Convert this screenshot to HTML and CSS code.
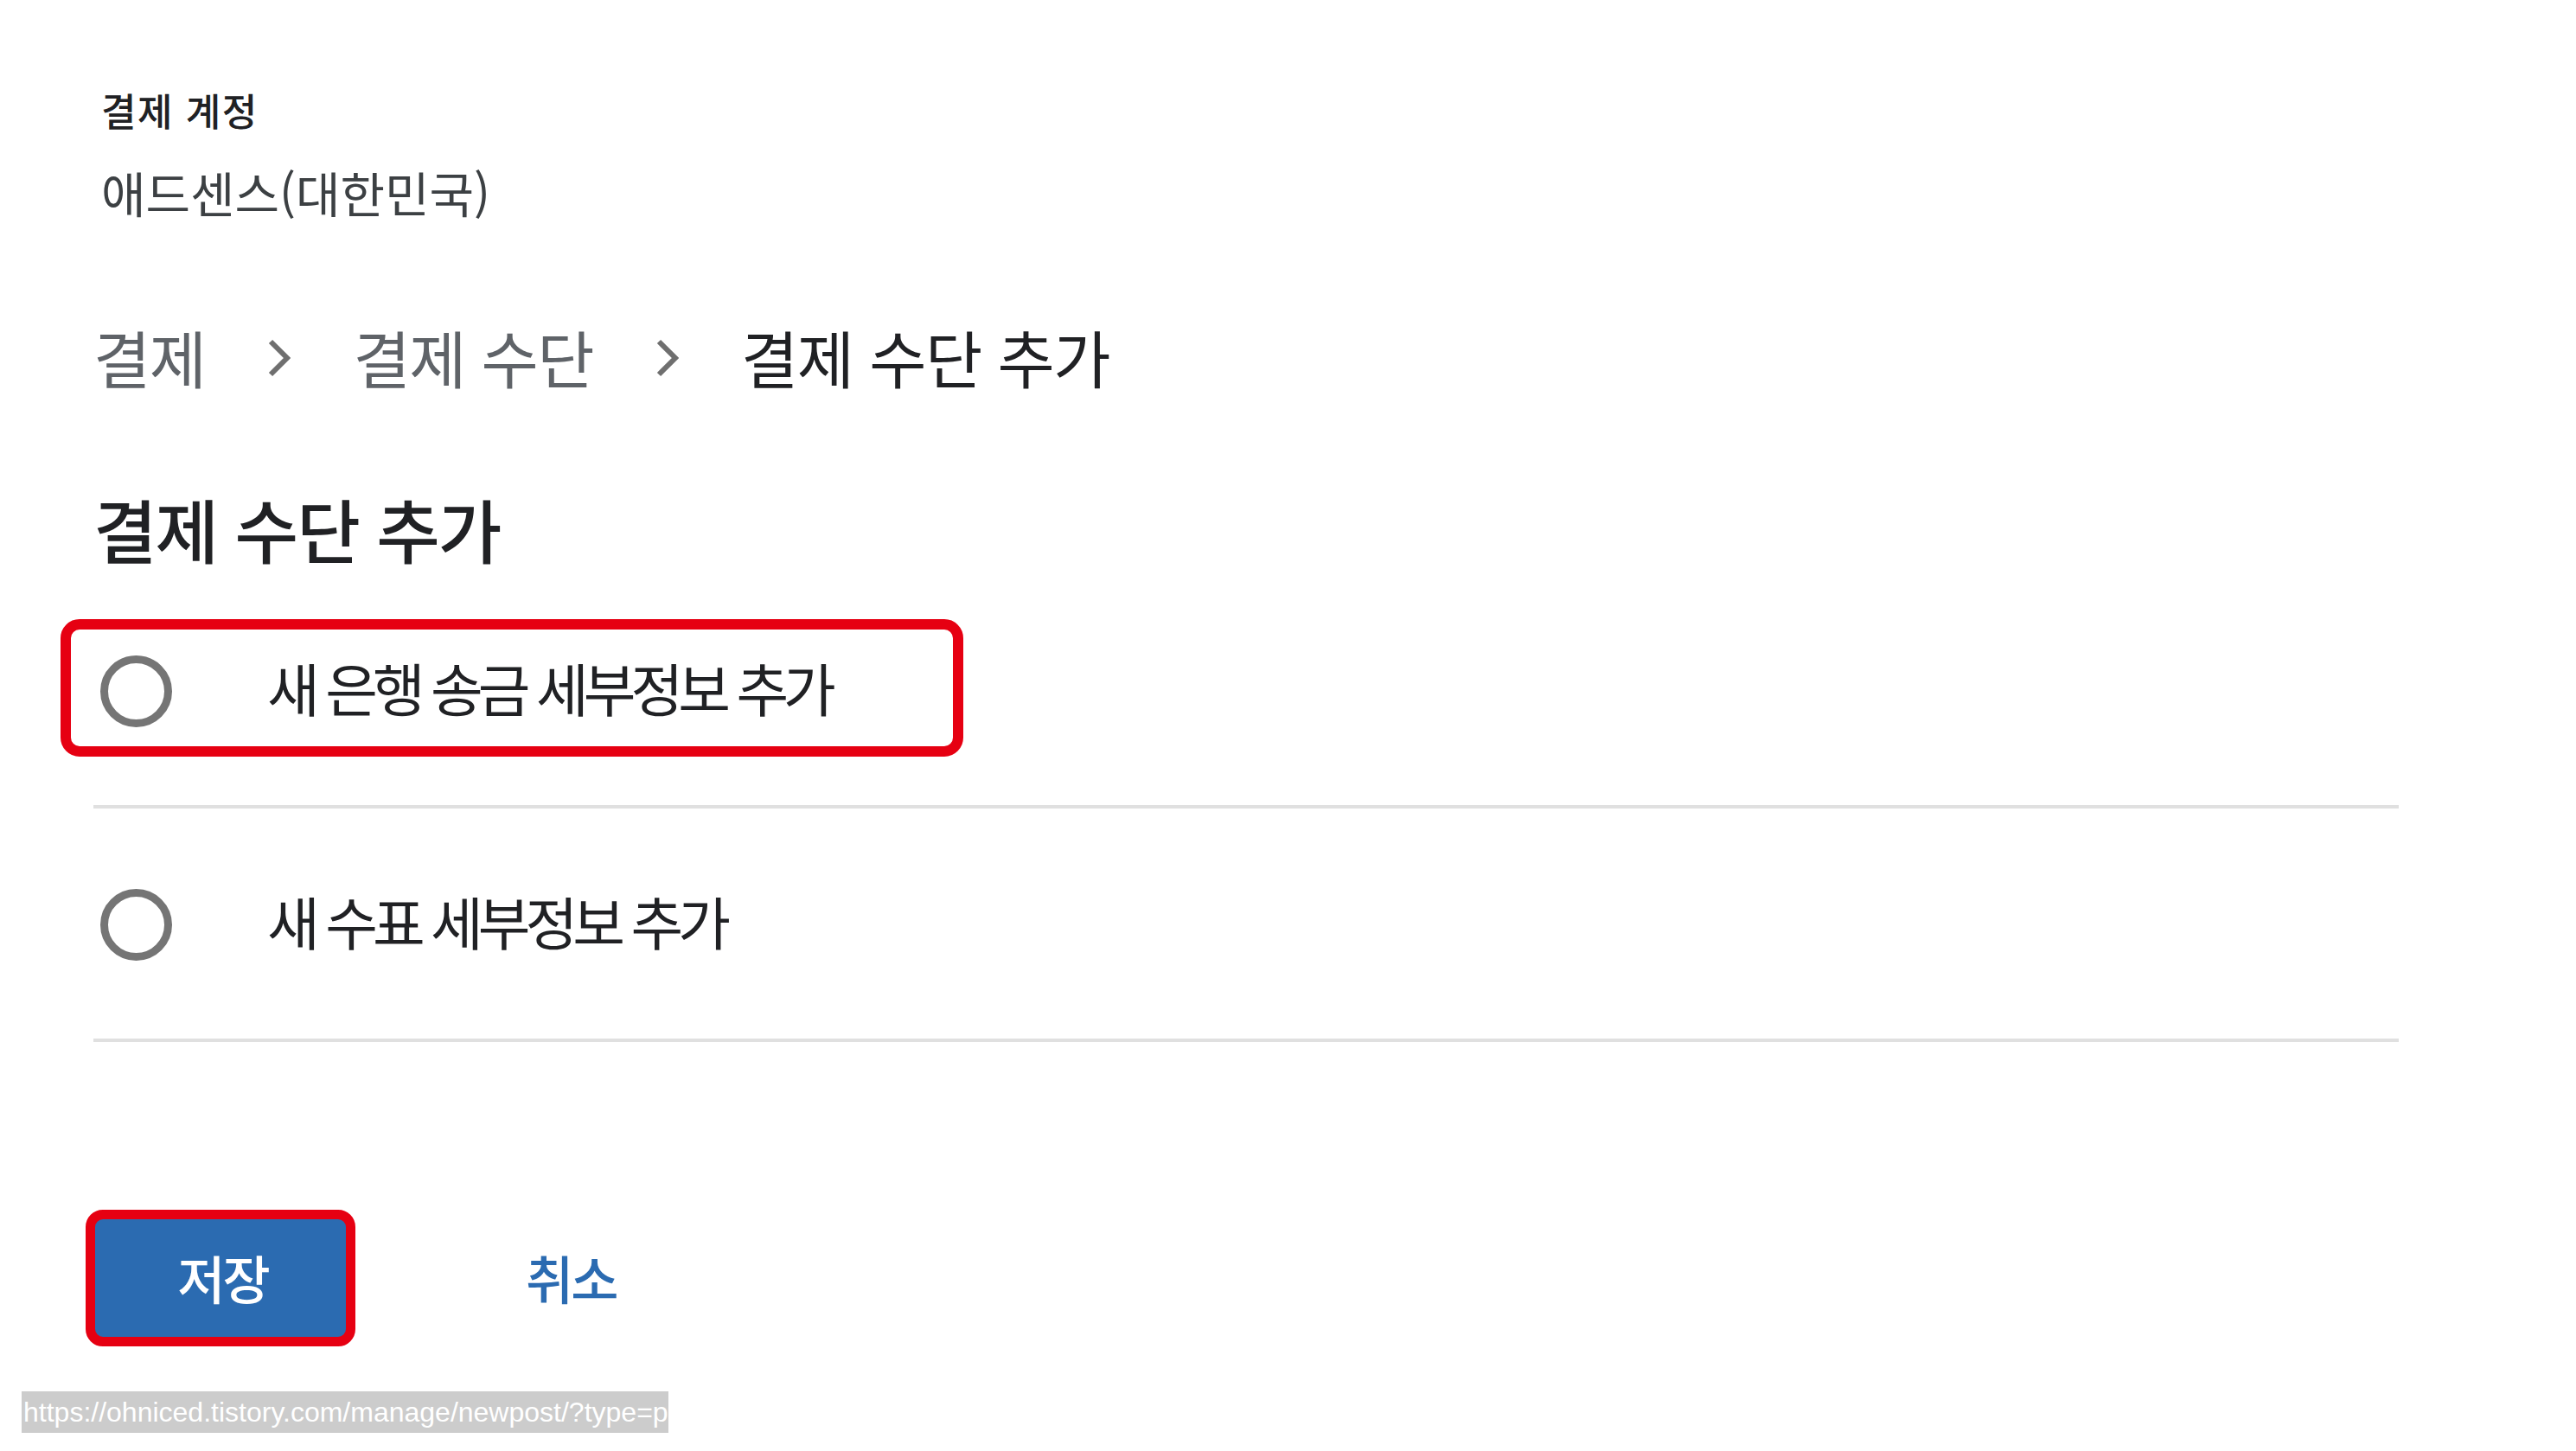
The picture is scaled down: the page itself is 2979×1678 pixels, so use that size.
FILE: index.html
```html
<!DOCTYPE html>
<html lang="ko">
<head>
<meta charset="utf-8">
<title>결제 수단 추가</title>
<link rel="stylesheet" href="styles.css">
</head>
<body>
<main class="page">
  <section class="account">
    <div class="account-label">결제 계정</div>
    <div class="account-value">애드센스(대한민국)</div>
  </section>

  <nav class="crumbs">
    <span class="crumb">결제</span>
    <svg class="chev" viewBox="0 0 28 46" aria-hidden="true"><polyline points="4,4 23,23 4,42" fill="none" stroke="#6f6f6f" stroke-width="6"/></svg>
    <span class="crumb">결제 수단</span>
    <svg class="chev" viewBox="0 0 28 46" aria-hidden="true"><polyline points="4,4 23,23 4,42" fill="none" stroke="#6f6f6f" stroke-width="6"/></svg>
    <span class="crumb current">결제 수단 추가</span>
  </nav>

  <h1 class="title">결제 수단 추가</h1>

  <div class="options">
    <label class="option">
      <span class="radio"></span>
      <span class="option-text">새 은행 송금 세부정보 추가</span>
      <span class="annot annot-option"></span>
    </label>
    <label class="option">
      <span class="radio"></span>
      <span class="option-text">새 수표 세부정보 추가</span>
    </label>
  </div>

  <div class="actions">
    <div class="save-wrap">
      <button class="btn-save" type="button">저장</button>
      <span class="annot annot-save"></span>
    </div>
    <button class="btn-cancel" type="button">취소</button>
  </div>
</main>

<div class="status">https://ohniced.tistory.com/manage/newpost/?type=p</div>
</body>
</html>
```

FILE: styles.css
```css
html, body {
  margin: 0;
  padding: 0;
  background: #ffffff;
}

body {
  font-family: "Noto Sans CJK KR", "Noto Sans", sans-serif;
  color: #202124;
  min-height: 1678px;
}

.page {
  padding: 97px 205px 120px 108px;
}

.account-label {
  font-size: 44px;
  line-height: 60px;
  font-weight: 500;
  letter-spacing: 1.5px;
  margin-left: 9px;
  color: #202124;
}

.account-value {
  margin-top: 30px;
  margin-left: 9px;
  font-size: 56px;
  line-height: 70px;
  letter-spacing: 0;
  color: #3c4043;
}

.crumbs {
  margin-top: 110px;
  height: 90px;
  display: flex;
  align-items: center;
}

.crumb {
  font-size: 72px;
  line-height: 90px;
  letter-spacing: -1.5px;
  color: #5f6368;
}

.crumb.current {
  color: #202124;
}

.chev {
  width: 28px;
  height: 46px;
  margin: 4px 71px 0 72px;
  flex: none;
}

.title {
  margin: 103px 0 0 0;
  font-size: 80px;
  line-height: 100px;
  font-weight: 500;
  letter-spacing: -2px;
  color: #202124;
}

.options {
  margin-top: 5px;
}

.option {
  position: relative;
  box-sizing: border-box;
  height: 270px;
  padding-top: 2px;
  border-bottom: 4px solid #e0e0e0;
  display: flex;
  align-items: center;
}

.radio {
  box-sizing: border-box;
  width: 83px;
  height: 83px;
  margin-left: 8px;
  border: 9px solid #757575;
  border-radius: 50%;
  flex: none;
}

.option-text {
  margin-left: 110px;
  padding-bottom: 10px;
  font-size: 66px;
  letter-spacing: -6px;
  color: #202124;
}

.annot {
  position: absolute;
  box-sizing: border-box;
  border: 12px solid #e60012;
  pointer-events: none;
}

.annot-option {
  left: -38px;
  top: 51px;
  width: 1044px;
  height: 159px;
  border-radius: 22px;
}

.actions {
  margin-top: 205px;
  display: flex;
  align-items: center;
}

.save-wrap {
  position: relative;
  margin-left: 2px;
  display: flex;
}

.btn-save {
  width: 291px;
  height: 136px;
  border: 0;
  border-radius: 6px;
  background: #2b6bb1;
  color: #ffffff;
  font-family: "Noto Sans CJK KR", "Noto Sans", sans-serif;
  font-size: 60px;
  font-weight: 500;
  letter-spacing: -3px;
  padding: 0 0 4px 4px;
}

.annot-save {
  left: -11px;
  top: -11px;
  width: 312px;
  height: 158px;
  border-width: 11px;
  border-radius: 20px;
}

.btn-cancel {
  margin-left: 207px;
  border: 0;
  background: transparent;
  color: #2b6bb1;
  font-family: "Noto Sans CJK KR", "Noto Sans", sans-serif;
  font-size: 60px;
  font-weight: 500;
  letter-spacing: -3px;
  padding: 0 0 4px 0;
}

.status {
  position: fixed;
  left: 25px;
  bottom: 21px;
  width: 748px;
  height: 48px;
  overflow: hidden;
  white-space: nowrap;
  background: #cccccc;
  color: #ffffff;
  font-family: "Liberation Sans", Arial, sans-serif;
  font-size: 32px;
  line-height: 48px;
  padding-left: 2px;
  box-sizing: border-box;
}
```
